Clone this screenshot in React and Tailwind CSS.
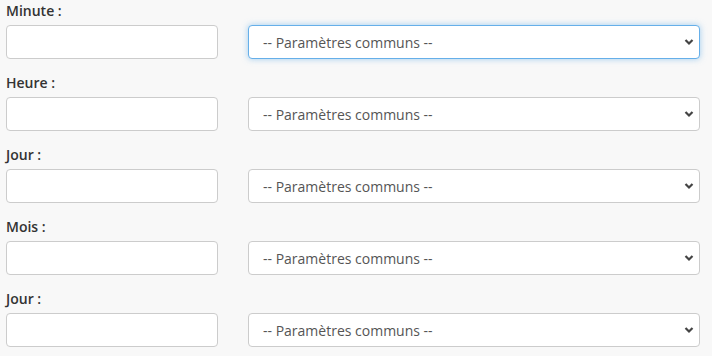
import React from 'react';

const rows = ['Minute :', 'Heure :', 'Jour :', 'Mois :', 'Jour :'];

const Chevron = () => (
  <svg className="pointer-events-none absolute right-[6px] top-1/2 -translate-y-1/2" width="10" height="8" viewBox="0 0 10 8">
    <path d="M1.5 2 L5 5.5 L8.5 2" fill="none" stroke="#444" strokeWidth="2.2" />
  </svg>
);

const Row = ({ label, focused }) => (
  <div className="mb-[13px]">
    <div className="text-[14px] leading-[22px] font-semibold text-[#333] mb-[3px]">{label}</div>
    <div className="flex items-center">
      <input
        type="text"
        className="w-[212px] h-[34px] rounded-[4px] border border-[#ccc] bg-white outline-none"
      />
      <div className="relative ml-[30px] w-[452px]">
        <select
          defaultValue=""
          className={
            focused
              ? 'appearance-none w-full h-[34px] rounded-[4px] border border-[#66afe9] bg-white pl-[14px] text-[14px] text-[#555] outline-none shadow-[0_0_6px_rgba(102,175,233,0.6)]'
              : 'appearance-none w-full h-[34px] rounded-[4px] border border-[#ccc] bg-white pl-[14px] text-[14px] text-[#555] outline-none'
          }
        >
          <option value="">-- Paramètres communs --</option>
        </select>
        <Chevron />
      </div>
    </div>
  </div>
);

export default function App() {
  return (
    <div className="w-[712px] h-[356px] overflow-hidden bg-[#f8f8f8] pl-[6px]" style={{ fontFamily: '"Open Sans", Arial, sans-serif' }}>
      {rows.map((r, i) => (
        <Row key={i} label={r} focused={i === 0} />
      ))}
    </div>
  );
}
